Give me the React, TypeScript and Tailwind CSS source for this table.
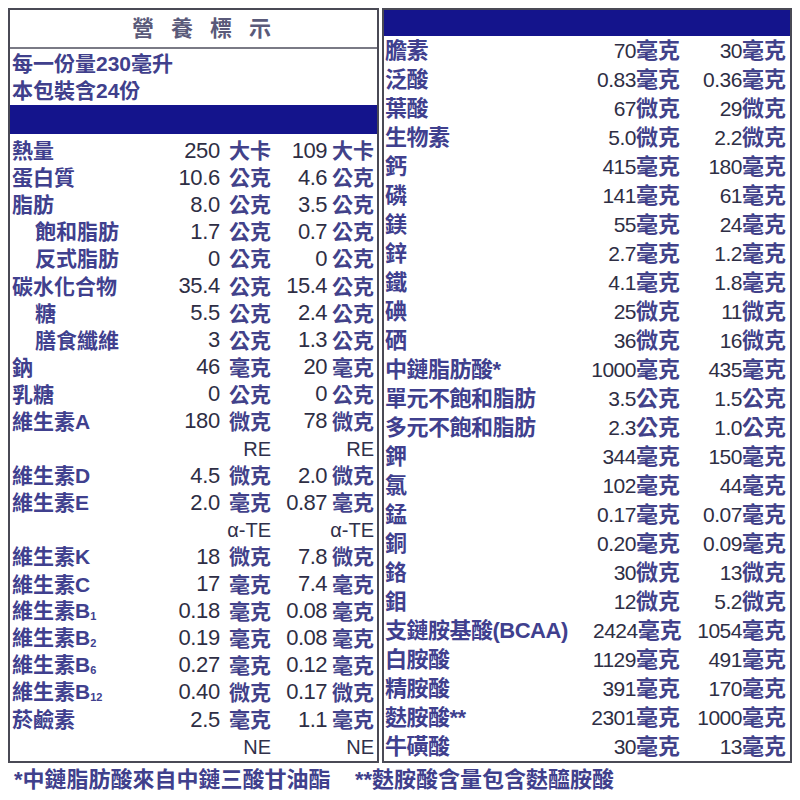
import React from "react";

type LRow = { label: React.ReactNode; indent?: boolean; v1?: string; u1?: string; v2?: string; u2?: string; note?: string };

const sub = (s: string) => <span className="text-[11px] align-[-2px]">{s}</span>;

const leftRows: LRow[] = [
  { label: "熱量", v1: "250", u1: "大卡", v2: "109", u2: "大卡" },
  { label: "蛋白質", v1: "10.6", u1: "公克", v2: "4.6", u2: "公克" },
  { label: "脂肪", v1: "8.0", u1: "公克", v2: "3.5", u2: "公克" },
  { label: "飽和脂肪", indent: true, v1: "1.7", u1: "公克", v2: "0.7", u2: "公克" },
  { label: "反式脂肪", indent: true, v1: "0", u1: "公克", v2: "0", u2: "公克" },
  { label: "碳水化合物", v1: "35.4", u1: "公克", v2: "15.4", u2: "公克" },
  { label: "糖", indent: true, v1: "5.5", u1: "公克", v2: "2.4", u2: "公克" },
  { label: "膳食纖維", indent: true, v1: "3", u1: "公克", v2: "1.3", u2: "公克" },
  { label: "鈉", v1: "46", u1: "毫克", v2: "20", u2: "毫克" },
  { label: "乳糖", v1: "0", u1: "公克", v2: "0", u2: "公克" },
  { label: "維生素A", v1: "180", u1: "微克", v2: "78", u2: "微克" },
  { label: "", note: "RE" },
  { label: "維生素D", v1: "4.5", u1: "微克", v2: "2.0", u2: "微克" },
  { label: "維生素E", v1: "2.0", u1: "毫克", v2: "0.87", u2: "毫克" },
  { label: "", note: "α-TE" },
  { label: "維生素K", v1: "18", u1: "微克", v2: "7.8", u2: "微克" },
  { label: "維生素C", v1: "17", u1: "毫克", v2: "7.4", u2: "毫克" },
  { label: <>維生素B{sub("1")}</>, v1: "0.18", u1: "毫克", v2: "0.08", u2: "毫克" },
  { label: <>維生素B{sub("2")}</>, v1: "0.19", u1: "毫克", v2: "0.08", u2: "毫克" },
  { label: <>維生素B{sub("6")}</>, v1: "0.27", u1: "毫克", v2: "0.12", u2: "毫克" },
  { label: <>維生素B{sub("12")}</>, v1: "0.40", u1: "微克", v2: "0.17", u2: "微克" },
  { label: "菸鹼素", v1: "2.5", u1: "毫克", v2: "1.1", u2: "毫克" },
  { label: "", note: "NE" },
];

const rightRows: [string, string, string, string, string][] = [
  ["膽素", "70", "毫克", "30", "毫克"],
  ["泛酸", "0.83", "毫克", "0.36", "毫克"],
  ["葉酸", "67", "微克", "29", "微克"],
  ["生物素", "5.0", "微克", "2.2", "微克"],
  ["鈣", "415", "毫克", "180", "毫克"],
  ["磷", "141", "毫克", "61", "毫克"],
  ["鎂", "55", "毫克", "24", "毫克"],
  ["鋅", "2.7", "毫克", "1.2", "毫克"],
  ["鐵", "4.1", "毫克", "1.8", "毫克"],
  ["碘", "25", "微克", "11", "微克"],
  ["硒", "36", "微克", "16", "微克"],
  ["中鏈脂肪酸*", "1000", "毫克", "435", "毫克"],
  ["單元不飽和脂肪", "3.5", "公克", "1.5", "公克"],
  ["多元不飽和脂肪", "2.3", "公克", "1.0", "公克"],
  ["鉀", "344", "毫克", "150", "毫克"],
  ["氯", "102", "毫克", "44", "毫克"],
  ["錳", "0.17", "毫克", "0.07", "毫克"],
  ["銅", "0.20", "毫克", "0.09", "毫克"],
  ["鉻", "30", "微克", "13", "微克"],
  ["鉬", "12", "微克", "5.2", "微克"],
  ["支鏈胺基酸(BCAA)", "2424", "毫克", "1054", "毫克"],
  ["白胺酸", "1129", "毫克", "491", "毫克"],
  ["精胺酸", "391", "毫克", "170", "毫克"],
  ["麩胺酸**", "2301", "毫克", "1000", "毫克"],
  ["牛磺酸", "30", "毫克", "13", "毫克"],
];

const FONT = "font-['Liberation_Sans','Noto_Sans_CJK_TC',sans-serif]";

export default function App() {
  return (
    <div className={`w-[800px] h-[800px] bg-white ${FONT} overflow-hidden`}>
      <div className="flex gap-[3px] pl-[8px] pt-[8px]">
        {/* Left panel */}
        <div className="w-[371px] h-[755px] border-2 border-[#4a4a55] flex flex-col overflow-hidden">
          <div className="h-[37px] flex items-center justify-center pl-[16px] gap-[17px] text-[22px] font-bold text-[#5a5a7a]">
            <span>營</span><span>養</span><span>標</span><span>示</span>
          </div>
          <div className="h-[2px] bg-[#7a7a85]" />
          <div className="h-[56px] pl-[2px] pt-[1px] text-[21px] leading-[27px] font-semibold text-[#40408c]">
            <div>每一份量230毫升</div>
            <div>本包裝含24份</div>
          </div>
          <div className="h-[29px] bg-[#14148c]" />
          <div className="pt-[3px]">
            {leftRows.map((r, i) => (
              <div key={i} className="h-[27.1px] flex items-center text-[21px] leading-none">
                <div className={`flex-1 font-semibold text-[#40408e] whitespace-nowrap ${r.indent ? "pl-[25px]" : "pl-[2px]"}`}>{r.label}</div>
                {r.note ? (
                  <>
                    <div className="w-[110px] text-right text-[#30304a] text-[20px]">{r.note}</div>
                    <div className="w-[106px] pr-[3px] text-right text-[#30304a] text-[20px]">{r.note}</div>
                  </>
                ) : (
                  <>
                    <div className="w-[110px] flex justify-end items-center">
                      <span className="text-[22px] text-[#2e2e44] tracking-[-0.3px]">{r.v1}</span>
                      <span className="ml-[9px] font-semibold text-[#42428a]">{r.u1}</span>
                    </div>
                    <div className="w-[106px] pr-[3px] flex justify-end items-center">
                      <span className="text-[22px] text-[#2e2e44] tracking-[-0.5px]">{r.v2}</span>
                      <span className="ml-[5px] font-semibold text-[#42428a]">{r.u2}</span>
                    </div>
                  </>
                )}
              </div>
            ))}
          </div>
        </div>
        {/* Right panel */}
        <div className="w-[410px] h-[755px] border-2 border-[#4a4a55] flex flex-col overflow-hidden">
          <div className="h-[27px] bg-[#14148c]" />
          <div>
            {rightRows.map((r, i) => (
              <div key={i} className="h-[29px] flex items-center text-[22px] leading-none">
                <div className="flex-1 pl-[1px] font-semibold text-[#40408e] whitespace-nowrap tracking-[-0.5px]">{r[0]}</div>
                <div className="w-[120px] pr-[4px] flex justify-end items-center">
                  <span className="text-[21px] text-[#2e2e44] tracking-[-0.5px]">{r[1]}</span>
                  <span className="font-semibold text-[#42428a]">{r[2]}</span>
                </div>
                <div className="w-[106px] pr-[4px] flex justify-end items-center">
                  <span className="text-[21px] text-[#2e2e44] tracking-[-0.5px]">{r[3]}</span>
                  <span className="font-semibold text-[#42428a]">{r[4]}</span>
                </div>
              </div>
            ))}
          </div>
        </div>
      </div>
      <div className="flex pl-[14px] pt-[3px] text-[22px] leading-[28px] font-semibold text-[#40408c]">
        <span className="w-[341px] whitespace-nowrap">*中鏈脂肪酸來自中鏈三酸甘油酯</span>
        <span className="whitespace-nowrap">**麩胺酸含量包含麩醯胺酸</span>
      </div>
    </div>
  );
}
